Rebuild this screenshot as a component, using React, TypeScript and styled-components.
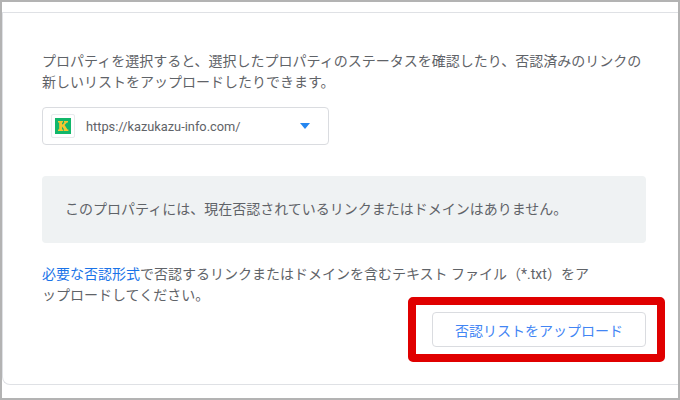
import React from "react";
import styled, { createGlobalStyle } from "styled-components";

const Global = createGlobalStyle`
  html, body { margin: 0; padding: 0; background: #fff; }
  body { font-family: Roboto, "Noto Sans CJK JP", sans-serif; }
  * { box-sizing: border-box; }
`;

const Frame = styled.div`
  position: relative;
  width: 680px;
  height: 400px;
  border: 2px solid #b3b3b3;
  padding-top: 10px;
  background: #fff;
  overflow: hidden;
`;

const Card = styled.main`
  height: 373px;
  margin-right: -10px;
  border-top: 1px solid #dfe1e5;
  border-left: 1px solid #dfe1e5;
  border-bottom: 1px solid #dfe1e5;
  border-bottom-left-radius: 8px;
  padding: 38px 0 0 39px;
`;

const Body = styled.div`
  width: 604px;
  display: flex;
  flex-direction: column;
`;

const Paragraph = styled.p`
  margin: 0;
  font-size: 14px;
  line-height: 21px;
  color: #5f6368;
`;

const Select = styled.div`
  width: 287px;
  height: 38px;
  margin-top: 14px;
  display: flex;
  align-items: center;
  padding: 0 17px 0 8px;
  border: 1px solid #dadce0;
  border-radius: 4px;
`;

const Favicon = styled.div`
  width: 24px;
  height: 24px;
  flex: none;
  display: flex;
  align-items: center;
  justify-content: center;
  border: 1px solid #e8eaed;
  border-radius: 2px;
`;

const SelectValue = styled.span`
  margin-left: 11px;
  flex: 1;
  font-size: 12.8px;
  color: #5f6368;
`;

const Notice = styled.div`
  height: 67px;
  margin-top: 31px;
  display: flex;
  align-items: center;
  padding: 0 0 4px 23px;
  background: #eff2f3;
  border-radius: 4px;
  font-size: 14px;
  color: #5f6368;
`;

const Help = styled(Paragraph)`
  margin-top: 21px;
  width: 560px;
`;

const Link = styled.a`
  color: #1a73e8;
  text-decoration: none;
`;

const Actions = styled.div`
  margin-top: 6px;
  display: flex;
  justify-content: flex-end;
`;

const UploadButton = styled.button`
  width: 214px;
  height: 35px;
  padding: 0;
  background: #fff;
  border: 1px solid #dadce0;
  border-radius: 4px;
  font-family: inherit;
  font-size: 14px;
  color: #4285f4;
`;

const Highlight = styled.div`
  position: absolute;
  left: 406px;
  top: 295px;
  width: 257px;
  height: 65px;
  border: 8px solid #e00000;
  border-radius: 5px;
  pointer-events: none;
`;

export default function App() {
  return (
    <>
      <Global />
      <Frame>
        <Card>
          <Body>
            <Paragraph>
              プロパティを選択すると、選択したプロパティのステータスを確認したり、否認済みのリンクの
              <br />
              新しいリストをアップロードしたりできます。
            </Paragraph>
            <Select>
              <Favicon>
                <svg width="16" height="16" viewBox="0 0 16 16">
                  <rect width="16" height="16" fill="#12b76a" />
                  <path
                    d="M3 3h5v1.5H7v2.2L9.6 4.5H9V3h4v1.5h-1L9.6 7l2.9 4.5h.9V13H8.6v-1.5h.6L7 8.5v3h1V13H3v-1.5h1.2v-7H3z"
                    fill="#f7c531"
                  />
                </svg>
              </Favicon>
              <SelectValue>https://kazukazu-info.com/</SelectValue>
              <svg width="12" height="6" viewBox="0 0 12 6">
                <path d="M1 0h10L6 6z" fill="#2486f0" />
              </svg>
            </Select>
            <Notice>このプロパティには、現在否認されているリンクまたはドメインはありません。</Notice>
            <Help>
              <Link href="#">必要な否認形式</Link>
              で否認するリンクまたはドメインを含むテキスト ファイル（*.txt）をア
              <br />
              ップロードしてください。
            </Help>
            <Actions>
              <UploadButton>否認リストをアップロード</UploadButton>
            </Actions>
          </Body>
        </Card>
        <Highlight />
      </Frame>
    </>
  );
}
